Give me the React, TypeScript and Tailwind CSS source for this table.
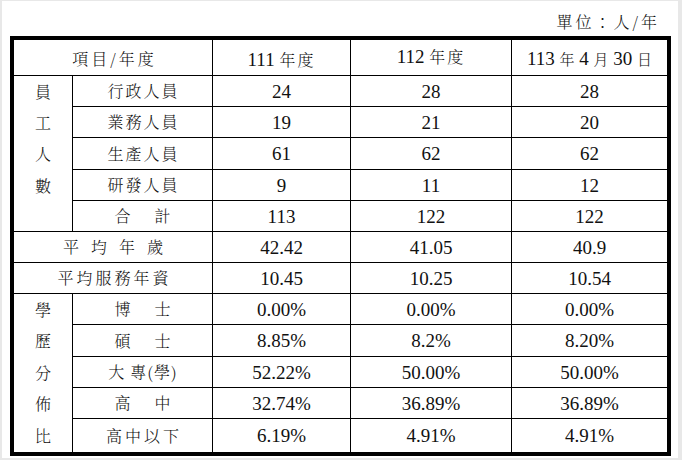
import React from "react";

type Item = { label: string; tracking: string; v: [string, string, string] };

const SERIF = "[font-family:Liberation_Serif,Noto_Serif_CJK_TC,Noto_Sans_CJK_TC,serif]";
const CJK = "font-light [font-family:Noto_Serif_CJK_TC,Noto_Sans_CJK_TC,serif]";

function Cell({ children, className = "" }: { children?: React.ReactNode; className?: string }) {
  return <div className={`bg-white flex items-center justify-center text-[#111] ${className}`}>{children}</div>;
}

function Num({ children }: { children: React.ReactNode }) {
  return (
    <Cell>
      <span className="text-[19px] leading-none [font-family:Liberation_Serif,Noto_Serif_CJK_TC,Noto_Sans_CJK_TC,serif]">
        {children}
      </span>
    </Cell>
  );
}

function Label({ children, tracking }: { children: React.ReactNode; tracking: string }) {
  return (
    <Cell>
      <span className={`text-[16px] leading-none ${CJK} ${tracking}`}>{children}</span>
    </Cell>
  );
}

function VerticalLabel({ chars }: { chars: { c: string; h: string }[] }) {
  return (
    <div className="row-span-5 bg-white flex flex-col text-[#111]">
      {chars.map((s) => (
        <div key={s.c} className={`${s.h} flex items-center justify-center text-[16px] leading-none ${CJK}`}>
          {s.c}
        </div>
      ))}
    </div>
  );
}

const staff: Item[] = [
  { label: "行政人員", tracking: "tracking-[2px] pl-[2px]", v: ["24", "28", "28"] },
  { label: "業務人員", tracking: "tracking-[2px] pl-[2px]", v: ["19", "21", "20"] },
  { label: "生產人員", tracking: "tracking-[2px] pl-[2px]", v: ["61", "62", "62"] },
  { label: "研發人員", tracking: "tracking-[2px] pl-[2px]", v: ["9", "11", "12"] },
  { label: "合　計", tracking: "tracking-[4px] pl-[4px]", v: ["113", "122", "122"] },
];
const edu: Item[] = [
  { label: "博　士", tracking: "tracking-[4px] pl-[4px]", v: ["0.00%", "0.00%", "0.00%"] },
  { label: "碩　士", tracking: "tracking-[4px] pl-[4px]", v: ["8.85%", "8.2%", "8.20%"] },
  { label: "大 專(學)", tracking: "tracking-[1px] pl-[1px]", v: ["52.22%", "50.00%", "50.00%"] },
  { label: "高　中", tracking: "tracking-[4px] pl-[4px]", v: ["32.74%", "36.89%", "36.89%"] },
  { label: "高中以下", tracking: "tracking-[3px] pl-[3px]", v: ["6.19%", "4.91%", "4.91%"] },
];
const staffChars = [
  { c: "員", h: "h-[31px]" },
  { c: "工", h: "h-[31px]" },
  { c: "人", h: "h-[32px]" },
  { c: "數", h: "h-[31px]" },
];
const eduChars = [
  { c: "學", h: "h-[31px]" },
  { c: "歷", h: "h-[32px]" },
  { c: "分", h: "h-[31px]" },
  { c: "佈", h: "h-[31px]" },
  { c: "比", h: "h-[33px]" },
];

function Rows({ items }: { items: Item[] }) {
  return (
    <>
      {items.map((r, i) => (
        <React.Fragment key={r.label + i}>
          <Label tracking={r.tracking}>{r.label}</Label>
          <Num>{r.v[0]}</Num>
          <Num>{r.v[1]}</Num>
          <Num>{r.v[2]}</Num>
        </React.Fragment>
      ))}
    </>
  );
}

export default function App() {
  return (
    <div className="w-[682px] h-[460px] bg-white border-l-2 border-t border-r-4 border-b-2 border-[#e8e8e8] box-border overflow-hidden">
      <div className="h-[35px] flex justify-end pr-[18px] pt-[11px]">
        <span className={`text-[16px] leading-[20px] tracking-[3px] text-[#111] ${CJK}`}>單位：人/年</span>
      </div>
      <div className="ml-[8px] w-[661px] border-4 border-black bg-black grid gap-px grid-cols-[58px_139px_137px_160px_155px] grid-rows-[35px_30px_30px_31px_30px_30px_30px_30px_30px_31px_30px_30px_33px]">
        {/* header */}
        <Cell className="col-span-2">
          <span className={`text-[16px] leading-none tracking-[3px] pl-[3px] pt-[3px] ${CJK}`}>項目/年度</span>
        </Cell>
        <Cell>
          <span className="leading-none pt-[3px] whitespace-nowrap">
            <span className={`text-[19px] ${SERIF}`}>111 </span>
            <span className={`text-[16px] tracking-[2px] ${CJK}`}>年度</span>
          </span>
        </Cell>
        <Cell>
          <span className="leading-none pb-[2px] whitespace-nowrap">
            <span className={`text-[19px] ${SERIF}`}>112 </span>
            <span className={`text-[16px] tracking-[2px] ${CJK}`}>年度</span>
          </span>
        </Cell>
        <Cell>
          <span className="leading-none pt-[2px] whitespace-nowrap">
            <span className={`text-[19px] ${SERIF}`}>113 </span>
            <span className={`text-[15px] ${CJK}`}>年</span>
            <span className={`text-[19px] ${SERIF}`}> 4 </span>
            <span className={`text-[15px] ${CJK}`}>月</span>
            <span className={`text-[19px] ${SERIF}`}> 30 </span>
            <span className={`text-[15px] ${CJK}`}>日</span>
          </span>
        </Cell>

        {/* staff block */}
        <VerticalLabel chars={staffChars} />
        <Rows items={staff} />

        {/* average age */}
        <Cell className="col-span-2">
          <span className={`text-[16px] leading-none tracking-[12px] pl-[12px] ${CJK}`}>平均年歲</span>
        </Cell>
        <Num>42.42</Num>
        <Num>41.05</Num>
        <Num>40.9</Num>

        {/* average seniority */}
        <Cell className="col-span-2">
          <span className={`text-[16px] leading-none tracking-[3px] pl-[3px] ${CJK}`}>平均服務年資</span>
        </Cell>
        <Num>10.45</Num>
        <Num>10.25</Num>
        <Num>10.54</Num>

        {/* education block */}
        <VerticalLabel chars={eduChars} />
        <Rows items={edu} />
      </div>
    </div>
  );
}
